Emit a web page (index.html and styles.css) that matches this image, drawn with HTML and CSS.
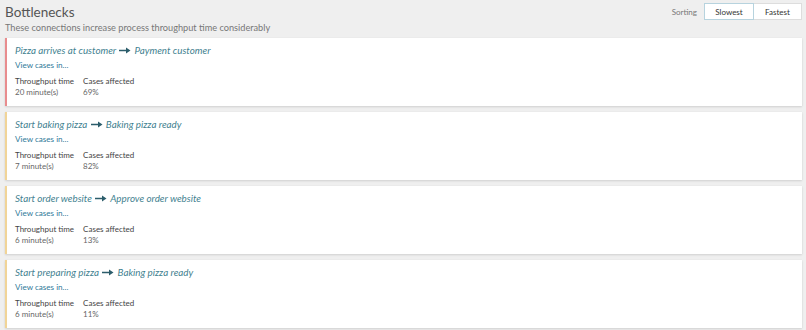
FILE: index.html
```html
<!DOCTYPE html>
<html>
<head>
<meta charset="utf-8">
<link rel="stylesheet" href="styles.css">
</head>
<body>
<div class="page">
  <div class="header">
    <div class="heading">
      <h1 class="title">Bottlenecks</h1>
      <p class="subtitle">These connections increase process throughput time considerably</p>
    </div>
    <div class="sorting">
      <span class="sort-label">Sorting</span>
      <div class="btn-group">
        <button class="btn active">Slowest</button>
        <button class="btn">Fastest</button>
      </div>
    </div>
  </div>

  <div class="card red">
    <div class="conn">Pizza arrives at customer <svg class="arrow" width="12" height="7" viewBox="0 0 12 7"><path d="M0 2.8h7V0.5L11.5 3.5 7 6.5V4.2H0z" fill="#2c5d6b"/></svg> Payment customer</div>
    <a class="view">View cases in...</a>
    <div class="stats">
      <div class="stat"><div class="label">Throughput time</div><div class="value">20 minute(s)</div></div>
      <div class="stat"><div class="label">Cases affected</div><div class="value">69%</div></div>
    </div>
  </div>

  <div class="card yellow">
    <div class="conn">Start baking pizza <svg class="arrow" width="12" height="7" viewBox="0 0 12 7"><path d="M0 2.8h7V0.5L11.5 3.5 7 6.5V4.2H0z" fill="#2c5d6b"/></svg> Baking pizza ready</div>
    <a class="view">View cases in...</a>
    <div class="stats">
      <div class="stat"><div class="label">Throughput time</div><div class="value">7 minute(s)</div></div>
      <div class="stat"><div class="label">Cases affected</div><div class="value">82%</div></div>
    </div>
  </div>

  <div class="card yellow">
    <div class="conn">Start order website <svg class="arrow" width="12" height="7" viewBox="0 0 12 7"><path d="M0 2.8h7V0.5L11.5 3.5 7 6.5V4.2H0z" fill="#2c5d6b"/></svg> Approve order website</div>
    <a class="view">View cases in...</a>
    <div class="stats">
      <div class="stat"><div class="label">Throughput time</div><div class="value">6 minute(s)</div></div>
      <div class="stat"><div class="label">Cases affected</div><div class="value">13%</div></div>
    </div>
  </div>

  <div class="card yellow">
    <div class="conn">Start preparing pizza <svg class="arrow" width="12" height="7" viewBox="0 0 12 7"><path d="M0 2.8h7V0.5L11.5 3.5 7 6.5V4.2H0z" fill="#2c5d6b"/></svg> Baking pizza ready</div>
    <a class="view">View cases in...</a>
    <div class="stats">
      <div class="stat"><div class="label">Throughput time</div><div class="value">6 minute(s)</div></div>
      <div class="stat"><div class="label">Cases affected</div><div class="value">11%</div></div>
    </div>
  </div>
</div>
</body>
</html>
```

FILE: styles.css
```css
html, body {
  margin: 0;
  padding: 0;
  background: #efefef;
  font-family: Lato, "Open Sans", sans-serif;
  color: #444;
}
.page {
  padding: 3px 4px 0 5px;
}
.header {
  display: flex;
  justify-content: space-between;
  align-items: flex-start;
  height: 35px;
}
.title {
  margin: 1px 0 0 0;
  font-size: 13.5px;
  font-weight: 400;
  color: #555;
  line-height: 17px;
}
.subtitle {
  margin: 1px 0 0 0;
  font-size: 9.2px;
  color: #777;
  line-height: 12px;
}
.sorting {
  display: flex;
  align-items: center;
  gap: 7px;
}
.sort-label {
  font-size: 8px;
  color: #777;
}
.btn-group {
  display: flex;
}
.btn {
  font-family: inherit;
  font-size: 8px;
  color: #333;
  background: #fff;
  border: 1px solid #ddd;
  height: 17px;
  padding: 0;
  width: 48px;
  margin: 0;
}
.btn.active {
  border-color: #b7d3de;
  width: 50px;
}
.btn + .btn {
  border-left: none;
}
.card {
  background: #fff;
  margin-bottom: 6px;
  height: 68px;
  box-sizing: border-box;
  padding: 5px 10px 0 8px;
  border-left: 2px solid #e88c8e;
  box-shadow: 0 1px 2px rgba(0,0,0,0.12), 0 0 1px rgba(0,0,0,0.06);
}
.card.yellow {
  border-left-color: #f1d497;
}
.conn {
  font-style: italic;
  font-size: 9.8px;
  color: #3f7f8f;
  line-height: 14px;
}
.arrow {
  vertical-align: 0px;
  margin: 0 1px;
}
.view {
  display: block;
  font-size: 8.1px;
  color: #2f7a99;
  margin-top: 2px;
  line-height: 12px;
}
.stats {
  display: flex;
  gap: 9px;
  margin-top: 5px;
}
.stat .label {
  font-size: 8px;
  color: #444;
  line-height: 11px;
}
.stat .value {
  font-size: 8px;
  color: #666;
  line-height: 11px;
}
```
